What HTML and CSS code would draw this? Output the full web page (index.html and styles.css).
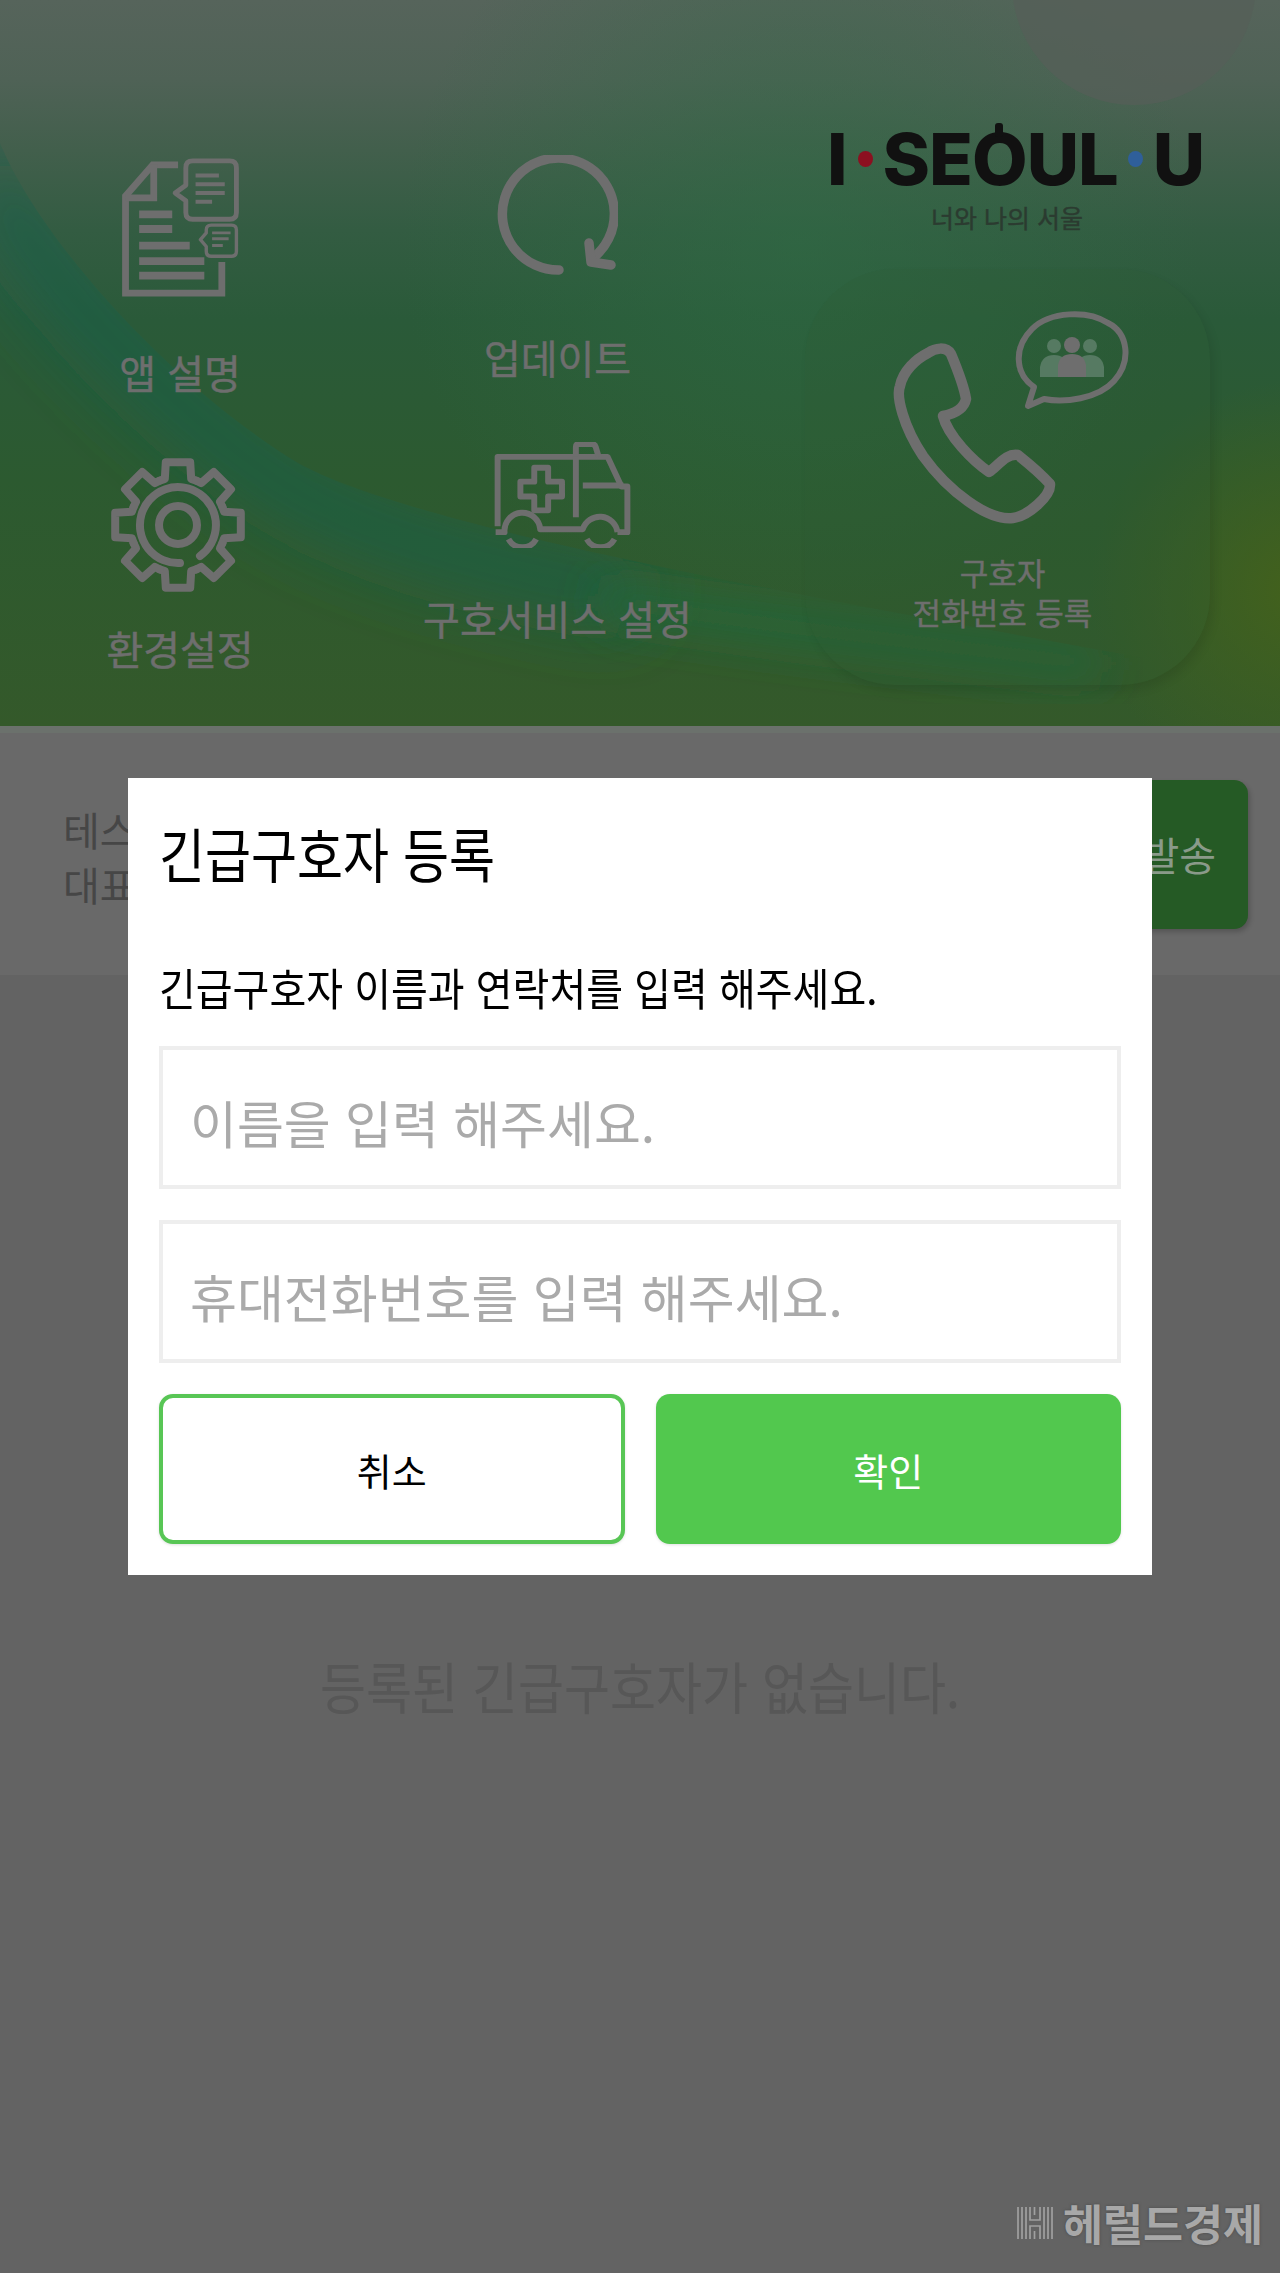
FILE: index.html
```html
<!DOCTYPE html>
<html lang="ko">
<head>
<meta charset="utf-8">
<title>긴급구호자 등록</title>
<link rel="stylesheet" href="styles.css">
</head>
<body>
<div class="page">
  <header class="hero">
    <svg class="hero-bg" viewBox="0 0 1280 726" preserveAspectRatio="none" aria-hidden="true">
      <defs>
        <clipPath id="below">
          <path d="M0 143C40 240 170 385 298 463C420 530 820 600 1280 682V726H0Z"/>
        </clipPath>
        <filter id="soft" x="-30%" y="-60%" width="160%" height="220%">
          <feGaussianBlur stdDeviation="34"/>
        </filter>
        <filter id="softer" x="-30%" y="-60%" width="160%" height="220%">
          <feGaussianBlur stdDeviation="22"/>
        </filter>
        <radialGradient id="olive" gradientUnits="userSpaceOnUse" cx="1300" cy="590" r="210">
          <stop offset="0" stop-color="#43611c"/>
          <stop offset="1" stop-color="#43611c" stop-opacity="0"/>
        </radialGradient>
        <radialGradient id="bright" gradientUnits="userSpaceOnUse" cx="800" cy="240" r="400">
          <stop offset="0" stop-color="#2e6c44" stop-opacity=".55"/>
          <stop offset="1" stop-color="#2e6c44" stop-opacity="0"/>
        </radialGradient>
      </defs>
      <rect width="1280" height="726" fill="url(#bright)"/>
      <rect width="1280" height="726" fill="url(#olive)"/>
      <g clip-path="url(#below)">
        <path d="M-10 170C30 270 170 410 290 490C390 545 520 575 640 595" fill="none" stroke="#1e5f4a" stroke-width="60" stroke-opacity=".75" filter="url(#soft)"/>
        <path d="M600 600C760 625 900 640 1100 665" fill="none" stroke="#236a3e" stroke-width="30" stroke-opacity=".8" filter="url(#softer)"/>
      </g>
      <circle cx="1134" cy="-17" r="122" fill="#565f58" fill-opacity=".75"/>
    </svg>

    <div class="hero-col hero-col-a">
      <div class="tile">
        <svg class="icon icon-doc" viewBox="119 155 122 147" aria-hidden="true">
          <g fill="none" stroke="#6e6e6e" stroke-width="7">
            <path d="M178 163H152L124 195V295H223V263"/>
            <path d="M153 163V197H124"/>
            <path d="M138 214H172M138 229H172M138 246H190" stroke-width="8"/>
            <path d="M138 262H205M138 277H205" stroke-width="8"/>
          </g>
          <g fill="none" stroke="#6e6e6e" stroke-width="5" stroke-linejoin="round">
            <path d="M193 159H231Q238 159 238 166V212Q238 219 231 219H193Q186 219 186 212V200L175 192L186 184V166Q186 159 193 159Z"/>
            <path d="M196 174H220M196 183H226M196 192H226M196 201H213" stroke-width="4"/>
            <path d="M212 225H233Q238 225 238 230V252Q238 257 233 257H212Q207 257 207 252V247L201 240L207 233V230Q207 225 212 225Z" stroke-width="3.5"/>
            <path d="M213 233H232M213 239H230M213 246H224" stroke-width="3"/>
          </g>
        </svg>
        <span class="tile-label label-a1">앱 설명</span>
      </div>
      <div class="tile tile-next-a">
        <svg class="icon icon-gear" viewBox="110 457 136 136" aria-hidden="true">
          <g fill="none" stroke="#6e6e6e" stroke-width="8" stroke-linejoin="round" stroke-linecap="round" transform="translate(178 525)">
            <path id="tooth" d="M44.3-18.4L46.1-13.2L62.8-12.2V12.2L46.1 13.2L44.3 18.4"/>
            <use href="#tooth" transform="rotate(45)"/>
            <use href="#tooth" transform="rotate(90)"/>
            <use href="#tooth" transform="rotate(135)"/>
            <use href="#tooth" transform="rotate(180)"/>
            <use href="#tooth" transform="rotate(225)"/>
            <use href="#tooth" transform="rotate(270)"/>
            <use href="#tooth" transform="rotate(315)"/>
            <path d="M2 38A38 38 0 1 1 22 31"/>
            <circle cx="0" cy="0" r="19"/>
          </g>
        </svg>
        <span class="tile-label label-a2">환경설정</span>
      </div>
    </div>

    <div class="hero-col hero-col-b">
      <div class="tile">
        <svg class="icon icon-refresh" viewBox="497 155 122 120" aria-hidden="true">
          <g fill="none" stroke="#6e6e6e" stroke-width="9.500" stroke-linecap="round" stroke-linejoin="round">
            <path d="M560 270A56 56 0 1 1 594 258"/>
            <path d="M590 243L592 262L612 265"/>
          </g>
        </svg>
        <span class="tile-label label-b1">업데이트</span>
      </div>
      <div class="tile tile-next-b">
        <svg class="icon icon-ambulance" viewBox="496 442 140 107" aria-hidden="true">
          <g fill="none" stroke="#6e6e6e" stroke-width="6" stroke-linejoin="round">
            <path d="M501 527V457H612L626 487H632V533H622"/>
            <path d="M580 457V518"/>
            <path d="M587 486H628"/>
            <path d="M580 457V447Q580 444 583 444H596Q599 444 600 447L603 457"/>
            <path d="M538 468H552V482H566V497H552V511H538V497H524V482H538Z"/>
            <path d="M499 533H508A18 18 0 0 1 544 530H587A18 18 0 0 1 622 533"/>
            <path d="M512 540A16 16 0 0 0 540 540M591 540A16 16 0 0 0 619 540"/>
          </g>
        </svg>
        <span class="tile-label label-b2">구호서비스 설정</span>
      </div>
    </div>

    <div class="hero-col hero-col-c">
      <div class="logo">
        <div class="logo-mark">
          <span>I</span><i class="dot dot-red"></i><span class="logo-word">SE<b class="logo-o">O</b>UL</span><i class="dot dot-blue"></i><span>U</span>
        </div>
        <div class="logo-sub">너와 나의 서울</div>
      </div>
      <div class="call-card">
        <svg class="icon icon-phone" viewBox="895 308 240 215" aria-hidden="true">
          <path d="M930 352C937 347 948 345 953 353C958 365 966 385 968 398C966 408 955 413 945 415C950 435 975 460 991 471C1000 465 1008 452 1020 454C1030 462 1045 475 1052 483C1053 495 1030 515 1015 517C990 520 950 490 925 455C905 425 898 395 902 385C905 370 918 358 930 352Z" fill="none" stroke="#6e6e6e" stroke-width="10.500" stroke-linejoin="round"/>
          <path d="M1030 405L1046 398C1066 402 1100 398 1116 380C1134 360 1130 332 1110 322C1090 309 1052 310 1034 328C1016 346 1016 372 1036 386Z" fill="none" stroke="#6e6e6e" stroke-width="6" stroke-linejoin="round"/>
          <g fill="#567a62">
            <circle cx="1056" cy="345" r="7"/><path d="M1042 376V366Q1044 354 1056 354Q1068 354 1070 366V376Z"/>
            <circle cx="1092" cy="345" r="7"/><path d="M1078 376V366Q1080 354 1092 354Q1104 354 1106 366V376Z"/>
          </g>
          <g fill="#6e6e6e">
            <circle cx="1074" cy="344" r="8"/><path d="M1060 376V364Q1062 353 1074 353Q1086 353 1088 364V376Z"/>
          </g>
        </svg>
        <div class="call-label">구호자<br>전화번호 등록</div>
      </div>
    </div>
  </header>

  <section class="status">
    <div class="status-text">테스<br>대표</div>
    <div class="status-send">발송</div>
  </section>

  <main class="list">
    <p class="list-empty">등록된 긴급구호자가 없습니다.</p>
  </main>

  <div class="watermark">
    <svg class="watermark-icon" viewBox="0 0 36 34" aria-hidden="true">
      <g fill="none" stroke="#a0a0a0" stroke-width="1.7">
        <path d="M1 1V33M5 1V33M9 1V33M27 1V33M31 1V33M35 1V33"/>
        <path d="M13 1V14H23V1M17.500 1V9M13 33V20H23V33M17.500 33V25"/>
      </g>
    </svg>
    <span class="watermark-text">헤럴드경제</span>
  </div>

  <div class="dialog-layer">
    <div class="dialog">
      <h1 class="dialog-title">긴급구호자 등록</h1>
      <p class="dialog-sub">긴급구호자 이름과 연락처를 입력 해주세요.</p>
      <input class="field" type="text" placeholder="이름을 입력 해주세요.">
      <input class="field" type="text" placeholder="휴대전화번호를 입력 해주세요.">
      <div class="dialog-actions">
        <button class="btn btn-cancel" type="button">취소</button>
        <button class="btn btn-ok" type="button">확인</button>
      </div>
    </div>
  </div>
</div>
</body>
</html>
```
FILE: styles.css
```css
* { box-sizing: border-box; }
html, body { margin: 0; padding: 0; }
body {
  font-family: "Noto Sans CJK KR", "Noto Sans", sans-serif;
  background: #636363;
}
.page {
  position: relative;
  width: 1280px;
  height: 2273px;
  overflow: hidden;
  display: flex;
  flex-direction: column;
  background: #636363;
}

/* Hero */
.hero {
  position: relative;
  flex: none;
  height: 726px;
  display: grid;
  grid-template-columns: 360px 395px 525px;
  background: linear-gradient(180deg, #56645b 0, #4f6256 80px, #425f4c 150px, #335c42 230px, #2a5a39 320px, #2c5a30 480px, #34592a 726px);
}
.hero-bg {
  position: absolute;
  inset: 0;
  width: 100%;
  height: 100%;
}
.hero-col { position: relative; display: flex; flex-direction: column; align-items: center; }
.hero-col-a { padding-top: 157px; }
.hero-col-b { padding-top: 155px; }
.hero-col-c { align-items: flex-start; padding-top: 130px; }
.tile { display: flex; flex-direction: column; align-items: center; }
.tile-next-a, .tile-next-b { margin-top: 60px; }
.tile-label {
  font-size: 40px;
  line-height: 50px;
  color: #6e6e6e;
  white-space: nowrap;
  -webkit-text-stroke: 0.5px #6e6e6e;
}
.label-a1 { margin-top: 47px; }
.label-a2 { margin-top: 30px; }
.label-b1 { margin-top: 57px; }
.label-b2 { margin-top: 45px; }
.icon { display: block; }
.icon-doc { width: 122px; height: 143px; }
.icon-gear { width: 136px; height: 136px; margin-left: -4px; }
.icon-refresh { width: 122px; height: 120px; }
.icon-ambulance { width: 140px; height: 106px; margin-left: 8px; }

/* Logo */
.logo { margin-left: 72px; width: 378px; display: flex; flex-direction: column; align-items: center; }
.logo-mark {
  width: 100%;
  display: flex;
  align-items: center;
  justify-content: space-between;
  font-family: Inter, "Liberation Sans", sans-serif;
  font-weight: 800;
  font-size: 72px;
  line-height: 58px;
  height: 58px;
  color: #111111;
}
.logo-word { letter-spacing: -1px; }
.logo-o { position: relative; font-weight: 800; }
.logo-o::before {
  content: "";
  position: absolute;
  left: 50%;
  top: 8px;
  width: 8px;
  height: 14px;
  margin-left: -4px;
  background: #111111;
  border-radius: 3px;
}
.dot { width: 15px; height: 16px; border-radius: 50%; }
.dot-red { background: #8c1020; }
.dot-blue { background: #2f5f9a; }
.logo-sub {
  margin-top: 13px;
  margin-right: 18px;
  font-size: 25px;
  line-height: 32px;
  color: #2b3b30;
  white-space: nowrap;
  -webkit-text-stroke: 0.4px #2b3b30;
}

/* Call card */
.call-card {
  margin-top: 36px;
  margin-left: 50px;
  width: 405px;
  height: 416px;
  border-radius: 90px;
  background: rgba(46, 92, 50, 0.2);
  box-shadow: 4px 6px 10px rgba(0, 0, 0, 0.09);
  padding-top: 40px;
  display: flex;
  flex-direction: column;
  align-items: center;
}
.icon-phone { width: 240px; height: 215px; margin-left: 10px; }
.call-label {
  margin-top: 28px;
  margin-right: 10px;
  font-size: 31px;
  line-height: 40px;
  text-align: center;
  color: #6e6e6e;
  -webkit-text-stroke: 0.5px #6e6e6e;
}

/* Status row */
.status {
  flex: none;
  height: 249px;
  border-top: 7px solid #6b716c;
  background: #696969;
  display: flex;
  align-items: center;
  justify-content: space-between;
  padding: 0 32px 0 63px;
}
.status-text {
  padding-top: 5px;
  font-size: 40px;
  line-height: 55px;
  color: #464646;
}
.status-send {
  width: 200px;
  height: 149px;
  border-radius: 14px;
  background: #255a25;
  box-shadow: 2px 3px 5px rgba(0, 0, 0, 0.2);
  color: #8a9a8a;
  font-size: 40px;
  display: flex;
  align-items: center;
  justify-content: flex-end;
  padding-right: 32px;
}

/* List */
.list { flex: 1; padding-top: 674px; }
.list-empty {
  margin: 0;
  font-size: 50px;
  line-height: 70px;
  text-align: center;
  color: #575757;
  transform: scaleY(1.12);
}

/* Watermark */
.watermark {
  position: absolute;
  left: 1017px;
  top: 2200px;
  display: flex;
  align-items: center;
  gap: 10px;
}
.watermark-icon { width: 36px; height: 34px; display: block; }
.watermark-text {
  font-size: 43.5px;
  line-height: 46px;
  font-weight: 700;
  color: #a8a8a8;
  text-shadow: 0 0 3px #4a4a4a;
  white-space: nowrap;
}

/* Dialog */
.dialog-layer {
  position: absolute;
  inset: 0;
  display: flex;
  justify-content: center;
  align-items: flex-start;
  padding-top: 778px;
}
.dialog {
  width: 1024px;
  height: 797px;
  background: #ffffff;
  padding: 39px 31px 31px;
  display: flex;
  flex-direction: column;
}
.dialog-title {
  margin: 0;
  font-size: 50px;
  line-height: 70px;
  font-weight: 400;
  color: #000000;
  transform: scaleY(1.18);
  transform-origin: left center;
}
.dialog-sub {
  margin: 75px 0 34px;
  font-size: 40px;
  line-height: 50px;
  color: #000000;
  transform: scaleY(1.12);
}
.field {
  display: block;
  width: 100%;
  height: 143px;
  flex: none;
  border: 4px solid #eeeeee;
  border-radius: 0;
  background: #ffffff;
  padding: 8px 0 0 27px;
  margin-bottom: 31px;
  font-family: inherit;
  font-size: 51px;
  color: #000000;
  outline: none;
}
.field::placeholder { color: #aaaaaa; opacity: 1; }
.dialog-actions { display: grid; grid-template-columns: 1fr 1fr; gap: 31px; }
.btn {
  height: 150px;
  border-radius: 14px;
  font-family: inherit;
  font-size: 38px;
  box-shadow: 0 1px 3px rgba(0, 0, 0, 0.12);
}
.btn-cancel { background: #ffffff; border: 4px solid #58c655; color: #000000; }
.btn-ok { background: #52c84e; border: 0; color: #ffffff; }
```
